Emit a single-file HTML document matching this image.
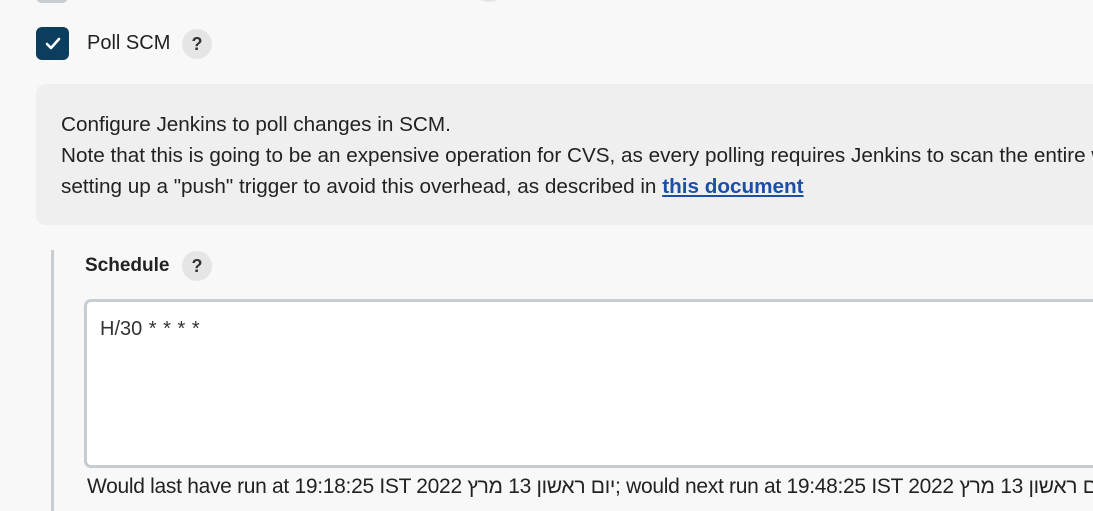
<!DOCTYPE html>
<html><head><style>
body{margin:0;width:1093px;height:511px;overflow:hidden;background:#f8f8f8;font-family:"Liberation Sans","Noto Sans CJK JP",sans-serif;color:#222}
#w{position:relative;width:1093px;height:511px;overflow:hidden}
.a{position:absolute}
.q{position:absolute;width:30px;height:30px;border-radius:50%;background:#e5e5e5;color:#333;font-weight:bold;font-size:18px;text-align:center;line-height:30px}
</style></head><body><div id="w">
<div class="a" style="left:36px;top:-14px;width:32px;height:17px;border-radius:6px;background:#c9cdd0"></div>
<div class="a" style="left:476px;top:-14px;width:26px;height:16px;border-radius:50%;background:#e5e5e5"></div>
<div class="a" style="left:36px;top:27px;width:33px;height:33px;border-radius:6px;background:#0b3d5e">
<svg width="33" height="33" viewBox="0 0 33 33"><path d="M11 17l4 4 8-9" stroke="#fff" stroke-width="2.6" fill="none" stroke-linecap="round" stroke-linejoin="round"/></svg></div>
<div class="a" style="left:87px;top:32px;font-size:20px;color:#222">Poll SCM</div>
<div class="q" style="left:182px;top:29px">?</div>
<div class="a" style="left:36px;top:84px;width:1057px;height:141px;border-radius:10px 0 0 10px;background:#efefef"></div>
<div class="a" style="left:61px;top:109px;width:1032px;overflow:hidden;font-size:20.7px;line-height:31px;white-space:nowrap;color:#222">Configure Jenkins to poll changes in SCM.<br>Note that this is going to be an expensive operation for CVS, as every polling requires Jenkins to scan the entire workspace<br>setting up a "push" trigger to avoid this overhead, as described in <a style="color:#1c4fa8;font-weight:bold;text-decoration:underline">this document</a></div>
<div class="a" style="left:51px;top:250px;width:3px;height:261px;background:#c8cdd1"></div>
<div class="a" style="left:85px;top:255px;font-size:19px;font-weight:bold;color:#222">Schedule</div>
<div class="q" style="left:182px;top:251px">?</div>
<div class="a" style="left:84px;top:299px;width:1006px;height:163px;border:3px solid #c5ccd2;border-right:none;border-radius:7px 0 0 7px;background:#fff"></div>
<div class="a" style="left:100px;top:318px;font-size:20px;color:#333;word-spacing:1px">H/30 * * * *</div>
<div class="a" style="left:87px;top:475px;width:1006px;overflow:hidden;font-size:21px;white-space:nowrap;letter-spacing:-0.3px;color:#222">Would last have run at 19:18:25 IST 2022 <bdi>מרץ</bdi> 13 <bdi>יום ראשון</bdi>; would next run at 19:48:25 IST 2022 <bdi>מרץ</bdi> 13 <bdi>יום ראשון</bdi></div>
</div></body></html>
